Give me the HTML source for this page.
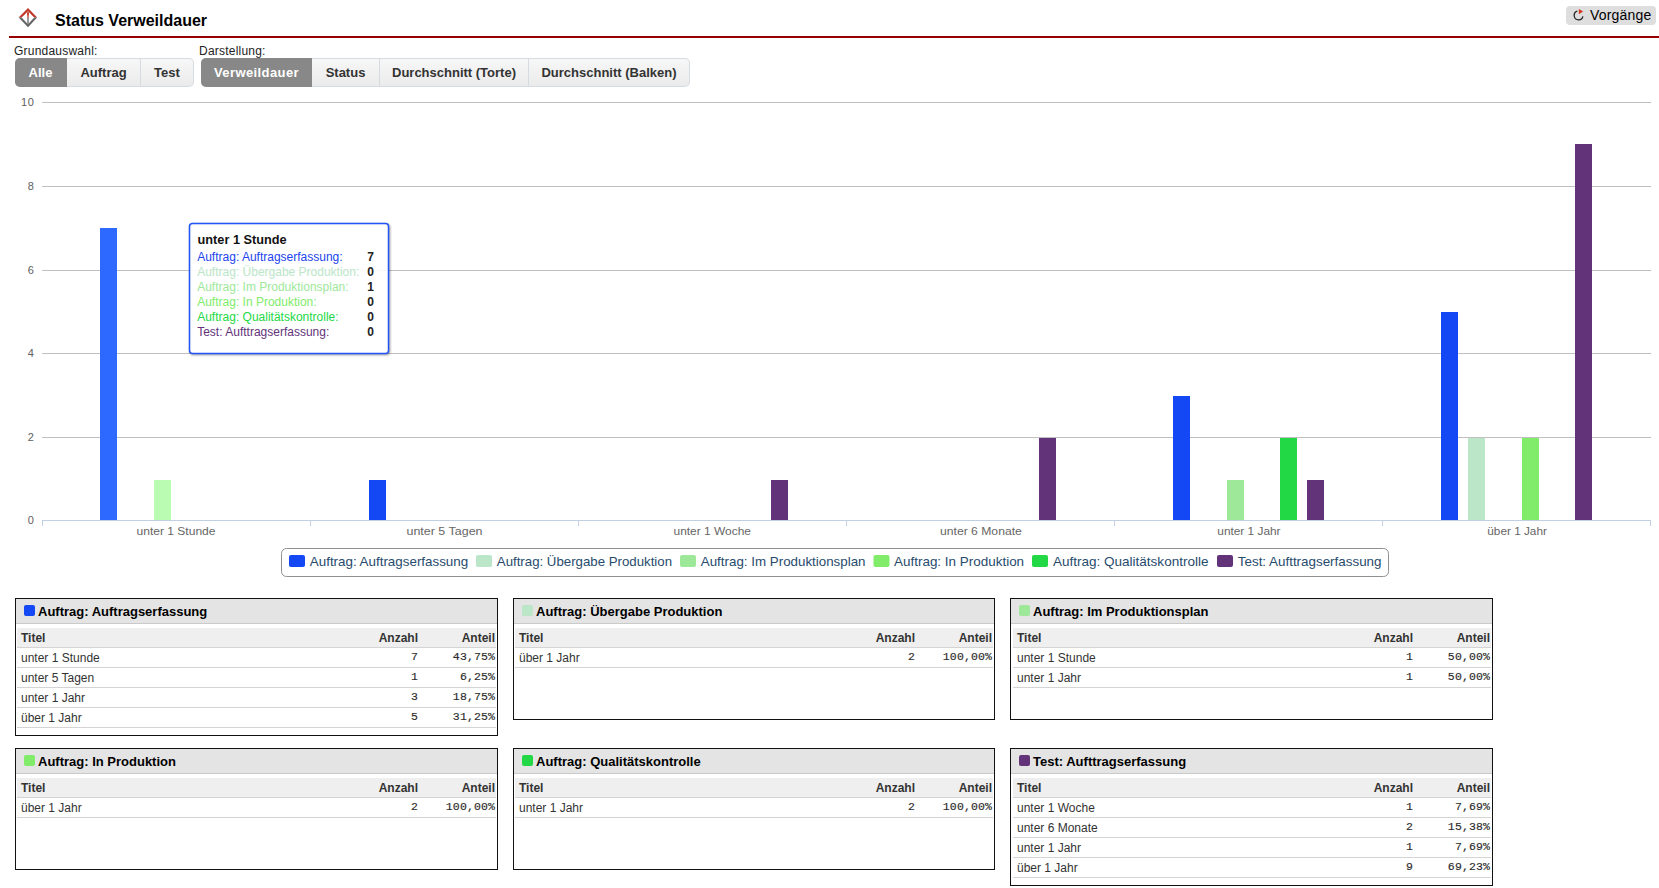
<!DOCTYPE html>
<html><head><meta charset="utf-8"><title>Status Verweildauer</title>
<style>
html,body{margin:0;padding:0;background:#fff;}
body{width:1659px;height:888px;position:relative;overflow:hidden;font-family:"Liberation Sans",sans-serif;color:#333;}
.abs{position:absolute;}
.title{position:absolute;left:55px;top:11px;font-size:16px;font-weight:bold;color:#000;line-height:20px;white-space:nowrap;}
.redline{position:absolute;left:9px;top:36px;width:1650px;height:2px;background:#960000;}
.vbtn{position:absolute;left:1566px;top:6px;width:90px;height:19px;background:#dedede;border-radius:4px;}
.vbtn span{position:absolute;left:24px;top:1px;font-size:14px;line-height:17px;color:#000;white-space:nowrap;letter-spacing:0.2px;}
.lbl{position:absolute;top:44px;font-size:12px;line-height:14px;color:#222;white-space:nowrap;letter-spacing:0.22px;}
.grp{position:absolute;top:58px;height:29px;border-radius:5px;overflow:hidden;background:#d5dbe0;}
.grp .b{position:absolute;top:1px;height:27px;line-height:27px;text-align:center;font-size:13px;font-weight:bold;color:#333;box-sizing:border-box;white-space:nowrap;
 background:linear-gradient(#f7f7f7,#ebebeb);}
.grp .b.last{border-radius:0 4px 4px 0;}
.grp .b.act{background:#888;color:#fff;top:0;height:29px;line-height:29px;}
svg text{font-family:"Liberation Sans",sans-serif;}
.yl{font-size:11px;fill:#606060;}
.xl{font-size:11px;fill:#666;}
.lg{font-size:13px;fill:#274b6d;}
.tth{font-size:12px;font-weight:bold;fill:#111;}
.ttr{font-size:12px;}
.ttv{font-size:12px;font-weight:bold;fill:#222;}
.box{position:absolute;border:1px solid #111;background:#fff;}
.bh{position:absolute;left:0;top:0;right:0;height:24px;background:#e4e4e4;border-bottom:1px solid #cacaca;}
.ic{position:absolute;left:8px;top:6px;width:11px;height:11px;border-radius:2px;}
.bt{position:absolute;left:22px;top:4px;font-size:13px;line-height:17px;font-weight:bold;color:#000;white-space:nowrap;}
table{position:absolute;left:1px;top:29px;border-collapse:collapse;}
td,th{height:19px;padding:0 0 0 4px;border-bottom:1px solid #d4d4d4;font-size:12px;line-height:19px;white-space:nowrap;}
tr.hr th{background:#efefef;font-weight:bold;color:#333;text-align:left;}
tr.hr th.n,tr.hr th.p{text-align:right;}
td.n,th.n{text-align:right;width:60px;padding:0;}
td.p,th.p{text-align:right;width:77px;padding:0;}
td.t{color:#333;}
td span,th span{position:relative;top:1px;}
td.n,td.p{font-family:"Liberation Mono",monospace;font-size:11.5px;letter-spacing:0.12px;color:#2a2a2a;-webkit-text-stroke:0.15px #2a2a2a;}
td.n span,td.p span{left:-1px;top:-1px;}
th.n span,th.p span{left:-1px;}
</style></head><body>
<svg class="abs" style="left:0;top:0" width="60" height="40" viewBox="0 0 60 40">
  <path d="M18.6 17.6 L28 8.1 L37.2 17.6 L34.2 17.6 L28 11.2 L21.6 17.6 Z" fill="#c0392b"/>
  <path d="M26.9 12.2 L29.1 12.2 L28.5 18 L27.5 18 Z" fill="#c0392b"/>
  <path d="M18.6 17.4 L21.6 17.4 L28 24.2 L34.2 17.4 L37.2 17.4 L28 27.2 Z" fill="#666"/>
  <path d="M27.35 17.4 L28.65 17.4 L28.65 24.5 L27.35 24.5 Z" fill="#666"/>
</svg>
<div class="title">Status Verweildauer</div>
<div class="vbtn"><svg class="abs" style="left:6px;top:3px" width="14" height="14" viewBox="0 0 14 14">
<path d="M5.3 2.2 A4.4 4.4 0 1 0 10.9 7.3" fill="none" stroke="#262626" stroke-width="1.3"/>
<path d="M6.8 0 L11.2 2.6 L6.8 5.2 Z" fill="#d2381f"/></svg><span>Vorgänge</span></div>
<div class="redline"></div>
<div class="lbl" style="left:14px">Grundauswahl:</div>
<div class="lbl" style="left:199px">Darstellung:</div>
<div class="grp" style="left:15px;width:179px">
 <div class="b act" style="left:0;width:52px;text-indent:-1px">Alle</div>
 <div class="b" style="left:52px;width:73px">Auftrag</div>
 <div class="b last" style="left:126px;width:52px">Test</div>
</div>
<div class="grp" style="left:201px;width:489px">
 <div class="b act" style="left:0;width:111px;letter-spacing:0.4px">Verweildauer</div>
 <div class="b" style="left:111px;width:67px">Status</div>
 <div class="b" style="left:179px;width:148px">Durchschnitt (Torte)</div>
 <div class="b last" style="left:328px;width:160px">Durchschnitt (Balken)</div>
</div>
<svg class="abs" style="left:0;top:0" width="1659" height="888" viewBox="0 0 1659 888">
<rect x="42" y="102" width="1609" height="1" fill="#c0c0c0"/>
<rect x="42" y="186" width="1609" height="1" fill="#c0c0c0"/>
<rect x="42" y="270" width="1609" height="1" fill="#c0c0c0"/>
<rect x="42" y="353" width="1609" height="1" fill="#c0c0c0"/>
<rect x="42" y="437" width="1609" height="1" fill="#c0c0c0"/>
<text x="20.9" y="105.5" class="yl">1</text><text x="33.8" y="105.5" text-anchor="end" class="yl">0</text>
<text x="33.8" y="189.5" text-anchor="end" class="yl">8</text>
<text x="33.8" y="273.5" text-anchor="end" class="yl">6</text>
<text x="33.8" y="356.5" text-anchor="end" class="yl">4</text>
<text x="33.8" y="440.5" text-anchor="end" class="yl">2</text>
<text x="33.8" y="523.5" text-anchor="end" class="yl">0</text>
<rect x="100" y="228" width="17" height="292" fill="#2d69ff"/>
<rect x="154" y="480" width="17" height="40" fill="#b9fcb2"/>
<rect x="369" y="480" width="17" height="40" fill="#1448f5"/>
<rect x="771" y="480" width="17" height="40" fill="#63337a"/>
<rect x="1039" y="438" width="17" height="82" fill="#63337a"/>
<rect x="1173" y="396" width="17" height="124" fill="#1448f5"/>
<rect x="1227" y="480" width="17" height="40" fill="#9ee89a"/>
<rect x="1280" y="438" width="17" height="82" fill="#22d844"/>
<rect x="1307" y="480" width="17" height="40" fill="#63337a"/>
<rect x="1441" y="312" width="17" height="208" fill="#1448f5"/>
<rect x="1468" y="438" width="17" height="82" fill="#bbe6c8"/>
<rect x="1522" y="438" width="17" height="82" fill="#80ec6a"/>
<rect x="1575" y="144" width="17" height="376" fill="#63337a"/>
<rect x="42" y="520" width="1609" height="1" fill="#c0d0e0"/>
<rect x="42" y="520" width="1" height="6" fill="#c0d0e0"/>
<rect x="310" y="520" width="1" height="6" fill="#c0d0e0"/>
<rect x="578" y="520" width="1" height="6" fill="#c0d0e0"/>
<rect x="846" y="520" width="1" height="6" fill="#c0d0e0"/>
<rect x="1114" y="520" width="1" height="6" fill="#c0d0e0"/>
<rect x="1382" y="520" width="1" height="6" fill="#c0d0e0"/>
<rect x="1650" y="520" width="1" height="6" fill="#c0d0e0"/>
<text x="136.5" y="535" class="xl" textLength="79" lengthAdjust="spacingAndGlyphs">unter 1 Stunde</text>
<text x="406.5" y="535" class="xl" textLength="76" lengthAdjust="spacingAndGlyphs">unter 5 Tagen</text>
<text x="673.5" y="535" class="xl" textLength="77.5" lengthAdjust="spacingAndGlyphs">unter 1 Woche</text>
<text x="940.0" y="535" class="xl" textLength="81.79999999999995" lengthAdjust="spacingAndGlyphs">unter 6 Monate</text>
<text x="1217.3" y="535" class="xl" textLength="63.200000000000045" lengthAdjust="spacingAndGlyphs">unter 1 Jahr</text>
<text x="1487.3" y="535" class="xl" textLength="59.600000000000136" lengthAdjust="spacingAndGlyphs">über 1 Jahr</text>
<rect x="281.5" y="548.5" width="1107" height="28" rx="5" ry="5" fill="#fff" stroke="#909090" stroke-width="1"/>
<rect x="289" y="555" width="16" height="12" rx="2" ry="2" fill="#1448f5"/>
<text x="309.8" y="566.3" class="lg" textLength="158.39999999999998" lengthAdjust="spacingAndGlyphs">Auftrag: Auftragserfassung</text>
<rect x="476" y="555" width="16" height="12" rx="2" ry="2" fill="#bbe6c8"/>
<text x="496.8" y="566.3" class="lg" textLength="175.2" lengthAdjust="spacingAndGlyphs">Auftrag: Übergabe Produktion</text>
<rect x="680" y="555" width="16" height="12" rx="2" ry="2" fill="#9ee89a"/>
<text x="700.8" y="566.3" class="lg" textLength="164.70000000000005" lengthAdjust="spacingAndGlyphs">Auftrag: Im Produktionsplan</text>
<rect x="873.5" y="555" width="16" height="12" rx="2" ry="2" fill="#80ec6a"/>
<text x="894.0" y="566.3" class="lg" textLength="130.10000000000002" lengthAdjust="spacingAndGlyphs">Auftrag: In Produktion</text>
<rect x="1032" y="555" width="16" height="12" rx="2" ry="2" fill="#22d844"/>
<text x="1052.9" y="566.3" class="lg" textLength="155.5999999999999" lengthAdjust="spacingAndGlyphs">Auftrag: Qualitätskontrolle</text>
<rect x="1217" y="555" width="16" height="12" rx="2" ry="2" fill="#63337a"/>
<text x="1237.8" y="566.3" class="lg" textLength="143.70000000000005" lengthAdjust="spacingAndGlyphs">Test: Aufttragserfassung</text>
<g transform="translate(1,1)" fill="none" stroke="#000"><rect x="189.5" y="223.5" width="199" height="130" rx="3" stroke-opacity="0.05" stroke-width="5"/><rect x="189.5" y="223.5" width="199" height="130" rx="3" stroke-opacity="0.1" stroke-width="3"/><rect x="189.5" y="223.5" width="199" height="130" rx="3" stroke-opacity="0.15" stroke-width="1"/></g>
<rect x="189.5" y="223.5" width="199" height="130" rx="3" ry="3" fill="rgba(255,255,255,0.9)" stroke="#2255f5" stroke-width="1.5"/>
<text x="197.6" y="243.5" class="tth" textLength="89" lengthAdjust="spacingAndGlyphs">unter 1 Stunde</text>
<text x="197.2" y="260.6" class="ttr" fill="#2244ee">Auftrag: Auftragserfassung:</text>
<text x="374" y="260.6" class="ttv" text-anchor="end">7</text>
<text x="197.2" y="275.6" class="ttr" fill="#bbe6c8">Auftrag: Übergabe Produktion:</text>
<text x="374" y="275.6" class="ttv" text-anchor="end">0</text>
<text x="197.2" y="290.6" class="ttr" fill="#9ee89a">Auftrag: Im Produktionsplan:</text>
<text x="374" y="290.6" class="ttv" text-anchor="end">1</text>
<text x="197.2" y="305.6" class="ttr" fill="#80ec6a">Auftrag: In Produktion:</text>
<text x="374" y="305.6" class="ttv" text-anchor="end">0</text>
<text x="197.2" y="320.6" class="ttr" fill="#22d844">Auftrag: Qualitätskontrolle:</text>
<text x="374" y="320.6" class="ttv" text-anchor="end">0</text>
<text x="197.2" y="335.6" class="ttr" fill="#63337a">Test: Aufttragserfassung:</text>
<text x="374" y="335.6" class="ttv" text-anchor="end">0</text>
</svg>
<div class="box" style="left:15px;top:598px;width:481px;height:136px">
<div class="bh"><span class="ic" style="background:#1448f5"></span><span class="bt">Auftrag: Auftragserfassung</span></div>
<table style="left:1px;width:479px"><tr class="hr"><th class="t"><span>Titel</span></th><th class="n"><span>Anzahl</span></th><th class="p"><span>Anteil</span></th></tr><tr><td class="t"><span>unter 1 Stunde</span></td><td class="n"><span>7</span></td><td class="p"><span>43,75%</span></td></tr><tr><td class="t"><span>unter 5 Tagen</span></td><td class="n"><span>1</span></td><td class="p"><span>6,25%</span></td></tr><tr><td class="t"><span>unter 1 Jahr</span></td><td class="n"><span>3</span></td><td class="p"><span>18,75%</span></td></tr><tr><td class="t"><span>über 1 Jahr</span></td><td class="n"><span>5</span></td><td class="p"><span>31,25%</span></td></tr></table></div><div class="box" style="left:513px;top:598px;width:480px;height:120px">
<div class="bh"><span class="ic" style="background:#bbe6c8"></span><span class="bt">Auftrag: Übergabe Produktion</span></div>
<table style="left:1px;width:478px"><tr class="hr"><th class="t"><span>Titel</span></th><th class="n"><span>Anzahl</span></th><th class="p"><span>Anteil</span></th></tr><tr><td class="t"><span>über 1 Jahr</span></td><td class="n"><span>2</span></td><td class="p"><span>100,00%</span></td></tr></table></div><div class="box" style="left:1010px;top:598px;width:481px;height:120px">
<div class="bh"><span class="ic" style="background:#9ee89a"></span><span class="bt">Auftrag: Im Produktionsplan</span></div>
<table style="left:2px;width:478px"><tr class="hr"><th class="t"><span>Titel</span></th><th class="n"><span>Anzahl</span></th><th class="p"><span>Anteil</span></th></tr><tr><td class="t"><span>unter 1 Stunde</span></td><td class="n"><span>1</span></td><td class="p"><span>50,00%</span></td></tr><tr><td class="t"><span>unter 1 Jahr</span></td><td class="n"><span>1</span></td><td class="p"><span>50,00%</span></td></tr></table></div><div class="box" style="left:15px;top:748px;width:481px;height:120px">
<div class="bh"><span class="ic" style="background:#80ec6a"></span><span class="bt">Auftrag: In Produktion</span></div>
<table style="left:1px;width:479px"><tr class="hr"><th class="t"><span>Titel</span></th><th class="n"><span>Anzahl</span></th><th class="p"><span>Anteil</span></th></tr><tr><td class="t"><span>über 1 Jahr</span></td><td class="n"><span>2</span></td><td class="p"><span>100,00%</span></td></tr></table></div><div class="box" style="left:513px;top:748px;width:480px;height:120px">
<div class="bh"><span class="ic" style="background:#22d844"></span><span class="bt">Auftrag: Qualitätskontrolle</span></div>
<table style="left:1px;width:478px"><tr class="hr"><th class="t"><span>Titel</span></th><th class="n"><span>Anzahl</span></th><th class="p"><span>Anteil</span></th></tr><tr><td class="t"><span>unter 1 Jahr</span></td><td class="n"><span>2</span></td><td class="p"><span>100,00%</span></td></tr></table></div><div class="box" style="left:1010px;top:748px;width:481px;height:136px">
<div class="bh"><span class="ic" style="background:#63337a"></span><span class="bt">Test: Aufttragserfassung</span></div>
<table style="left:2px;width:478px"><tr class="hr"><th class="t"><span>Titel</span></th><th class="n"><span>Anzahl</span></th><th class="p"><span>Anteil</span></th></tr><tr><td class="t"><span>unter 1 Woche</span></td><td class="n"><span>1</span></td><td class="p"><span>7,69%</span></td></tr><tr><td class="t"><span>unter 6 Monate</span></td><td class="n"><span>2</span></td><td class="p"><span>15,38%</span></td></tr><tr><td class="t"><span>unter 1 Jahr</span></td><td class="n"><span>1</span></td><td class="p"><span>7,69%</span></td></tr><tr><td class="t"><span>über 1 Jahr</span></td><td class="n"><span>9</span></td><td class="p"><span>69,23%</span></td></tr></table></div>
</body></html>
